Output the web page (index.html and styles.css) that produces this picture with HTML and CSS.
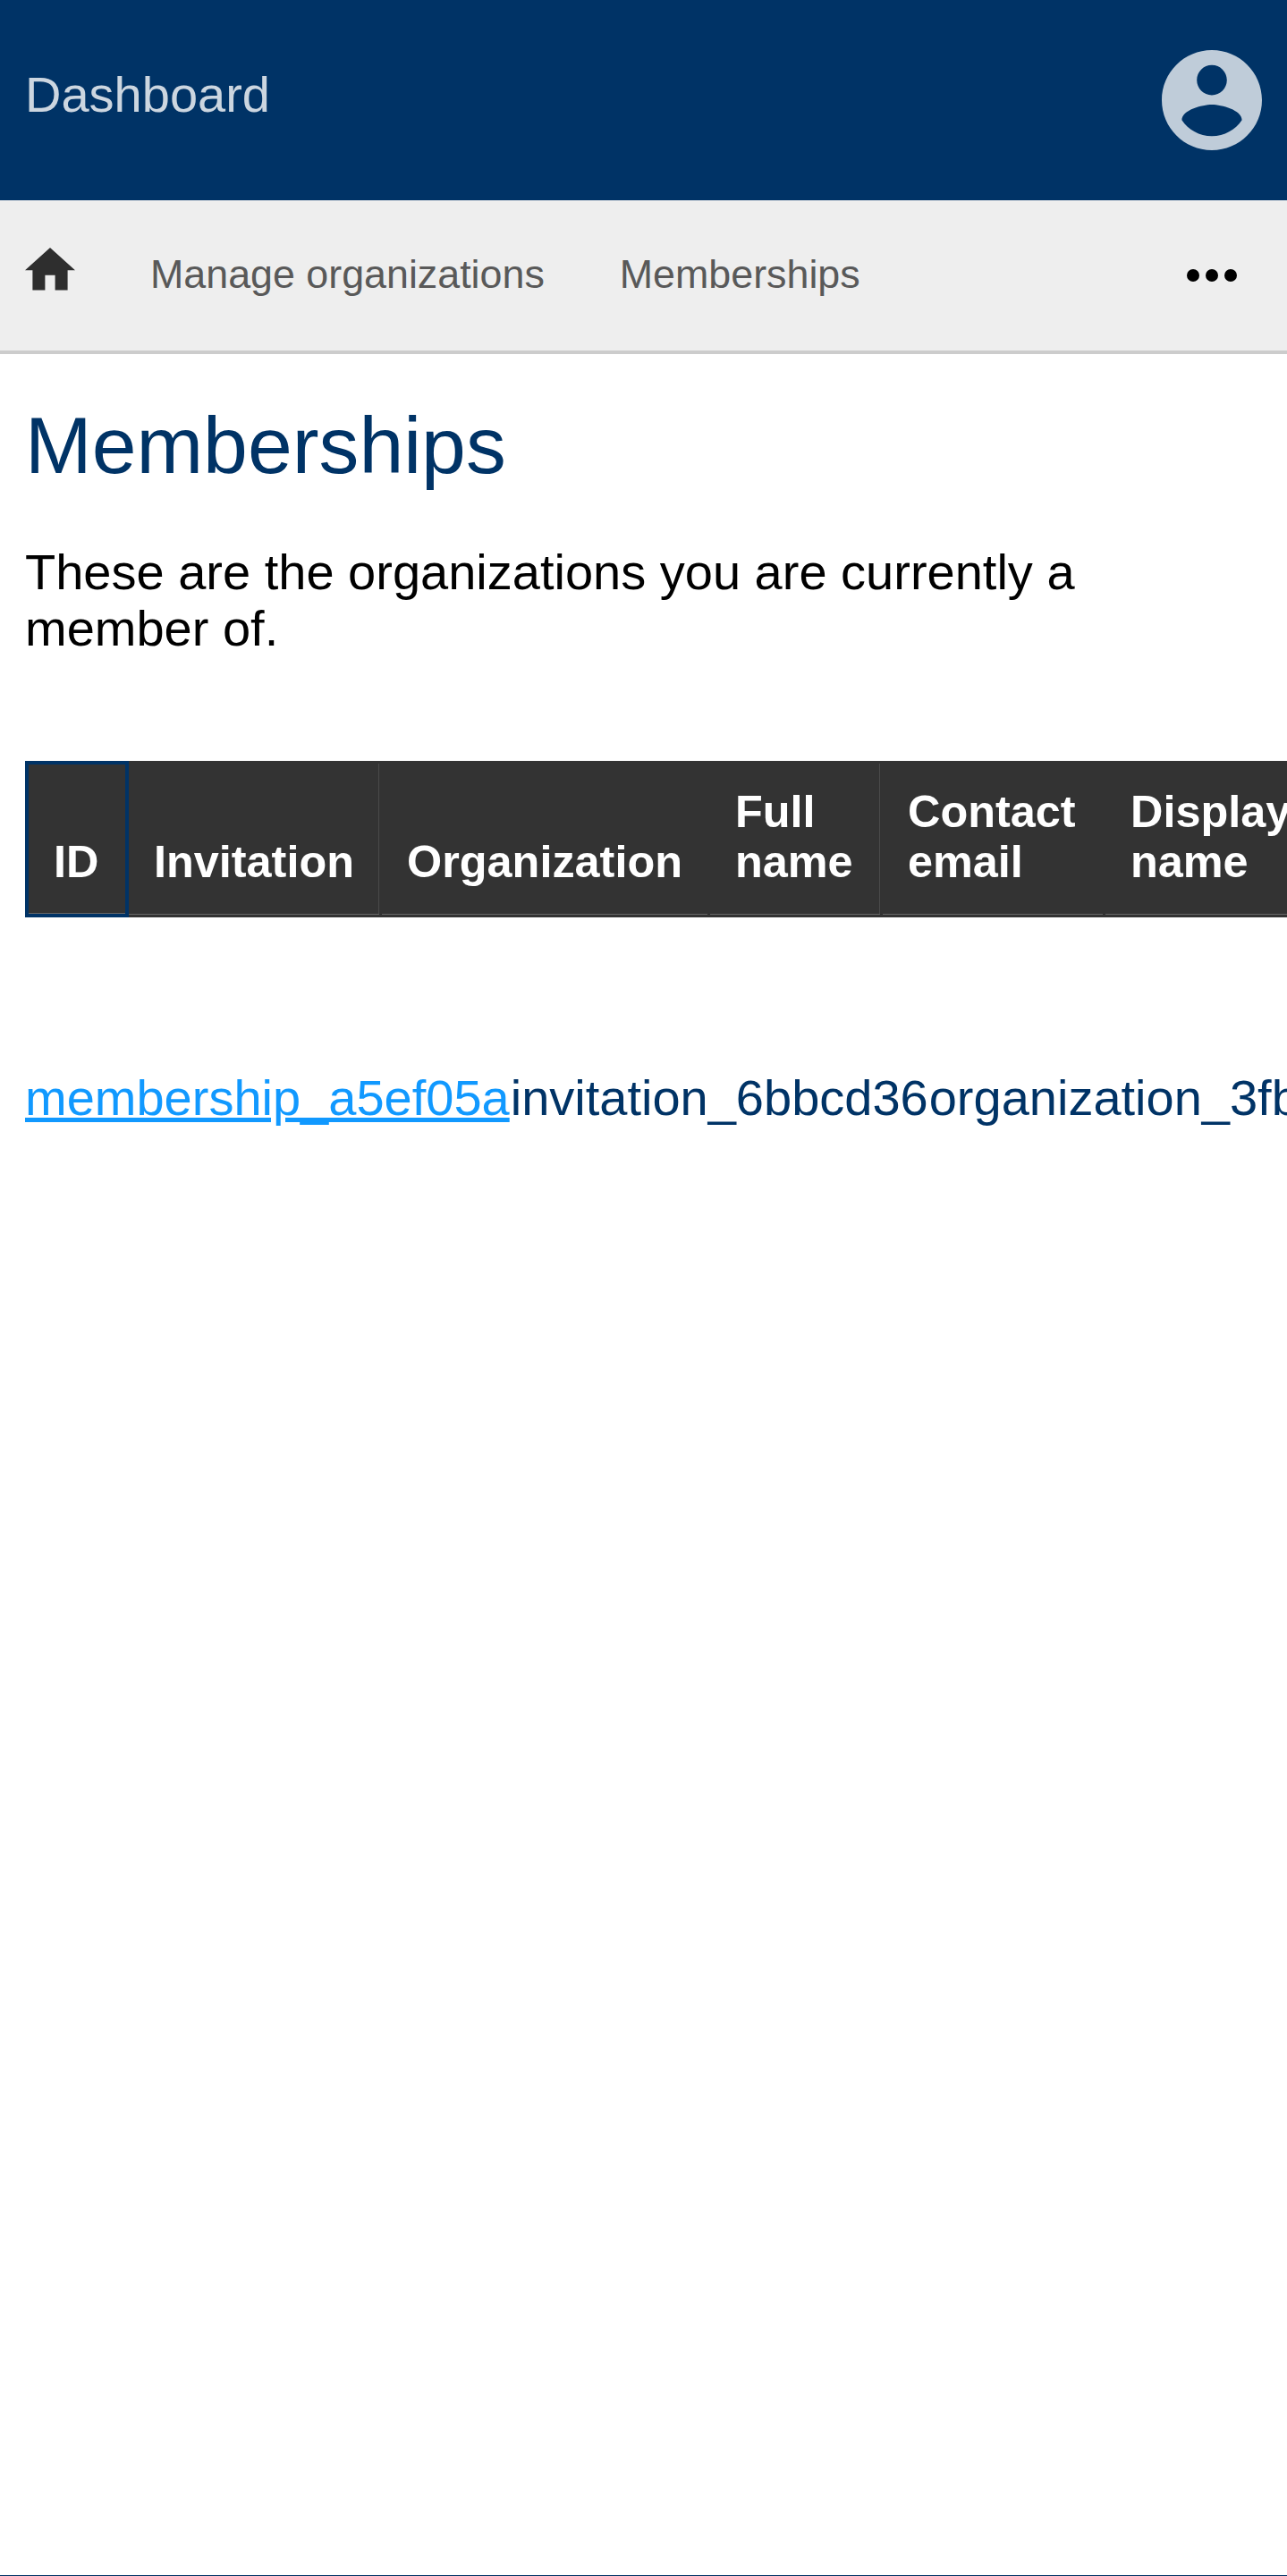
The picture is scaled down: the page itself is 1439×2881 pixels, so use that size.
FILE: index.html
```html
<!DOCTYPE html>
<html lang="en">
<head>
<meta charset="utf-8">
<title>Memberships</title>
<link rel="stylesheet" href="styles.css">
</head>
<body>
<div class="app">
  <header class="topbar">
    <a class="brand">Dashboard</a>
    <svg class="account" viewBox="2 2 20 20"><path d="M12 2C6.480 2 2 6.480 2 12s4.480 10 10 10 10-4.480 10-10S17.520 2 12 2zm0 3c1.660 0 3 1.340 3 3s-1.340 3-3 3-3-1.340-3-3 1.340-3 3-3zm0 14.200c-2.500 0-4.710-1.280-6-3.220.030-1.990 4-3.080 6-3.080 1.990 0 5.970 1.090 6 3.080-1.290 1.940-3.500 3.220-6 3.220z"/></svg>
  </header>
  <nav class="nav">
    <svg class="home" viewBox="2 3 20 17"><path d="M10 20v-6h4v6h5v-8h3L12 3 2 12h3v8z"/></svg>
    <a class="nav-link">Manage organizations</a>
    <a class="nav-link">Memberships</a>
    <svg class="more" viewBox="4 10 16 4"><circle cx="6" cy="12" r="2"/><circle cx="12" cy="12" r="2"/><circle cx="18" cy="12" r="2"/></svg>
  </nav>
  <main class="content">
    <h1 class="title">Memberships</h1>
    <p class="intro">These are the organizations you are currently a member of.</p>
    <div class="table">
      <div class="head">
        <div class="th th-id active">ID</div>
        <div class="th th-invitation ruled">Invitation</div>
        <div class="th th-organization">Organization</div>
        <div class="th th-name ruled">Full name</div>
        <div class="th th-email">Contact email</div>
        <div class="th th-display">Display name</div>
      </div>
      <div class="row">
        <a class="link">membership_a5ef05a</a><span class="cell">invitation_6bbcd36</span><span class="cell">organization_3fb</span>
      </div>
    </div>
  </main>
</div>
</body>
</html>
```
FILE: styles.css
```css
* { box-sizing: border-box; }
body {
  margin: 0;
  background: #003366;
  font-family: "Liberation Sans", Arial, sans-serif;
  font-size: 56px;
  line-height: 63px;
  color: #000;
}
.app { height: 2880px; background: #fff; overflow: hidden; }
svg { display: block; flex: none; }
.topbar {
  display: flex;
  justify-content: space-between;
  align-items: center;
  height: 224px;
  padding: 0 28.5px 0 28px;
  background: #003366;
}
.brand { color: #ccd6e0; padding-bottom: 13px; }
.account { width: 112px; height: 112px; fill: #bfccd9; }
.nav {
  display: flex;
  align-items: center;
  height: 172px;
  padding: 0 56.5px 0 28px;
  background: #eee;
  border-bottom: 4px solid #ccc;
  font-size: 44.8px;
  line-height: 52px;
  color: #595959;
}
.home { width: 56px; height: 47.6px; fill: #2e2e2e; margin-bottom: 14px; }
.nav-link { margin-left: 84px; padding-bottom: 4px; }
.more { width: 56px; height: 14px; margin-left: auto; fill: #000; }
.content { padding: 52px 0 0 28px; }
.title {
  margin: 0 0 59px;
  font-size: 89.6px;
  font-weight: 400;
  line-height: 101px;
  color: #003366;
}
.intro { margin: 0; padding-right: 28px; }
.table { margin-top: 117px; }
.head { display: flex; height: 175px; width: 1410.5px; overflow: hidden; background: #333; }
.th {
  display: flex;
  align-items: flex-end;
  flex: none;
  padding: 0 24px 31px 28px;
  border-right: 3px solid #333;
  border-bottom: 3px solid #333;
  box-shadow: inset 0 -1px #666;
  font-size: 50.4px;
  font-weight: 700;
  line-height: 56px;
  color: #fff;
}
.active { border: 4px solid #003366; border-bottom-width: 4px; padding-bottom: 30px; }
.ruled { background: linear-gradient(#4a4a4a, #4a4a4a) right 3px / 1px 100% no-repeat; }
.th-id { width: 116px; }
.th-invitation { width: 283px; }
.th-organization { width: 367px; }
.th-name { width: 193px; }
.th-email { width: 249px; }
.th-display { width: 260px; }
.row { display: flex; margin-top: 170px; color: #003366; white-space: nowrap; }
.link { color: #1199ff; text-decoration: underline; }
.cell { padding-left: 1px; }
```
